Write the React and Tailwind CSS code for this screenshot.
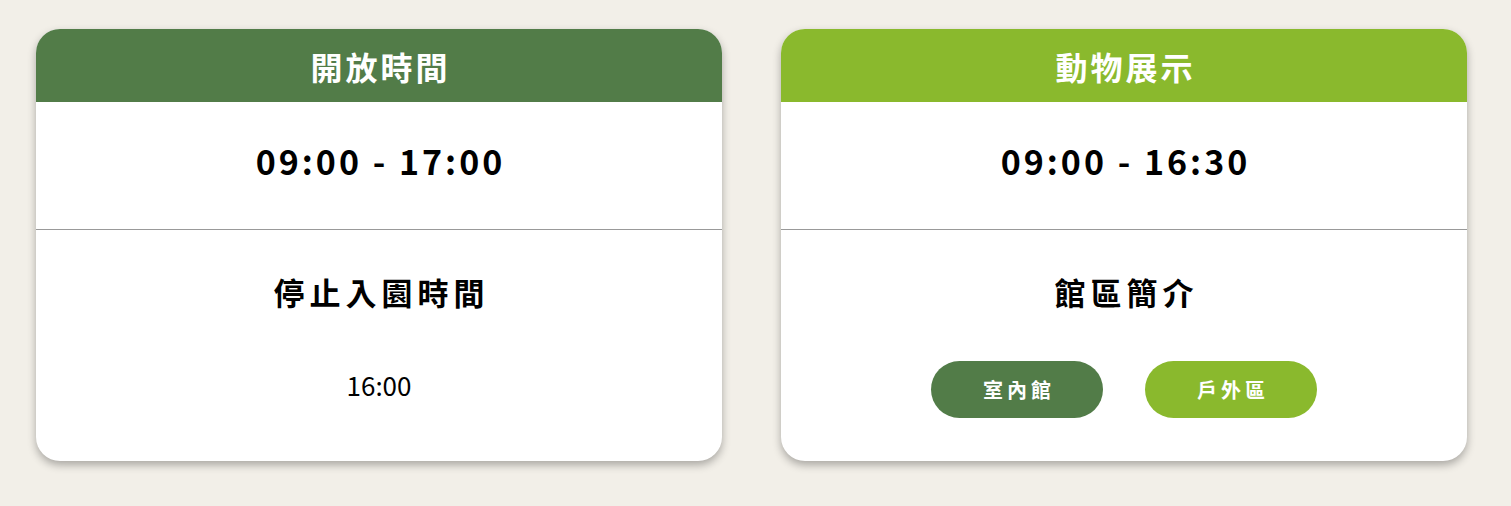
export default function App() {
  const font = { fontFamily: '"Noto Sans CJK TC", "Noto Sans", sans-serif' };

  return (
    <div className="min-h-screen bg-[#f2efe8] pl-[36px] pt-[29px]" style={font}>
      <div className="flex gap-[59px]">
        <section className="w-[686px] overflow-hidden rounded-[24px] bg-white shadow-[0_4px_8px_rgba(0,0,0,0.3)]">
          <h2 className="flex h-[73px] items-center justify-center bg-[#527c48] pl-[3px] text-[32px] font-bold tracking-[3px] text-white">
            開放時間
          </h2>
          <div className="flex h-[128px] items-center justify-center border-b border-[#999] pb-[10px] pl-[3px] text-[34px] font-bold tracking-[3px] text-black">
            09:00 - 17:00
          </div>
          <div className="flex h-[231px] flex-col items-center pt-[42px]">
            <h3 className="pl-[5px] text-[31px] font-bold tracking-[5px] leading-[40px]">停止入園時間</h3>
            <p className="mt-[57px] text-[26px] leading-[32px]">16:00</p>
          </div>
        </section>

        <section className="w-[686px] overflow-hidden rounded-[24px] bg-white shadow-[0_4px_8px_rgba(0,0,0,0.3)]">
          <h2 className="flex h-[73px] items-center justify-center bg-[#8ab92d] pl-[3px] text-[32px] font-bold tracking-[3px] text-white">
            動物展示
          </h2>
          <div className="flex h-[128px] items-center justify-center border-b border-[#999] pb-[10px] pl-[3px] text-[34px] font-bold tracking-[3px] text-black">
            09:00 - 16:30
          </div>
          <div className="flex h-[231px] flex-col items-center pt-[42px]">
            <h3 className="pl-[5px] text-[31px] font-bold tracking-[5px] leading-[40px]">館區簡介</h3>
            <div className="mt-[49px] flex gap-[42px]">
              <button className="h-[57px] w-[172px] rounded-full bg-[#527c48] pl-[4px] text-[20px] font-bold tracking-[4px] text-white">
                室內館
              </button>
              <button className="h-[57px] w-[172px] rounded-full bg-[#8ab92d] pl-[4px] text-[20px] font-bold tracking-[4px] text-white">
                戶外區
              </button>
            </div>
          </div>
        </section>
      </div>
    </div>
  );
}
